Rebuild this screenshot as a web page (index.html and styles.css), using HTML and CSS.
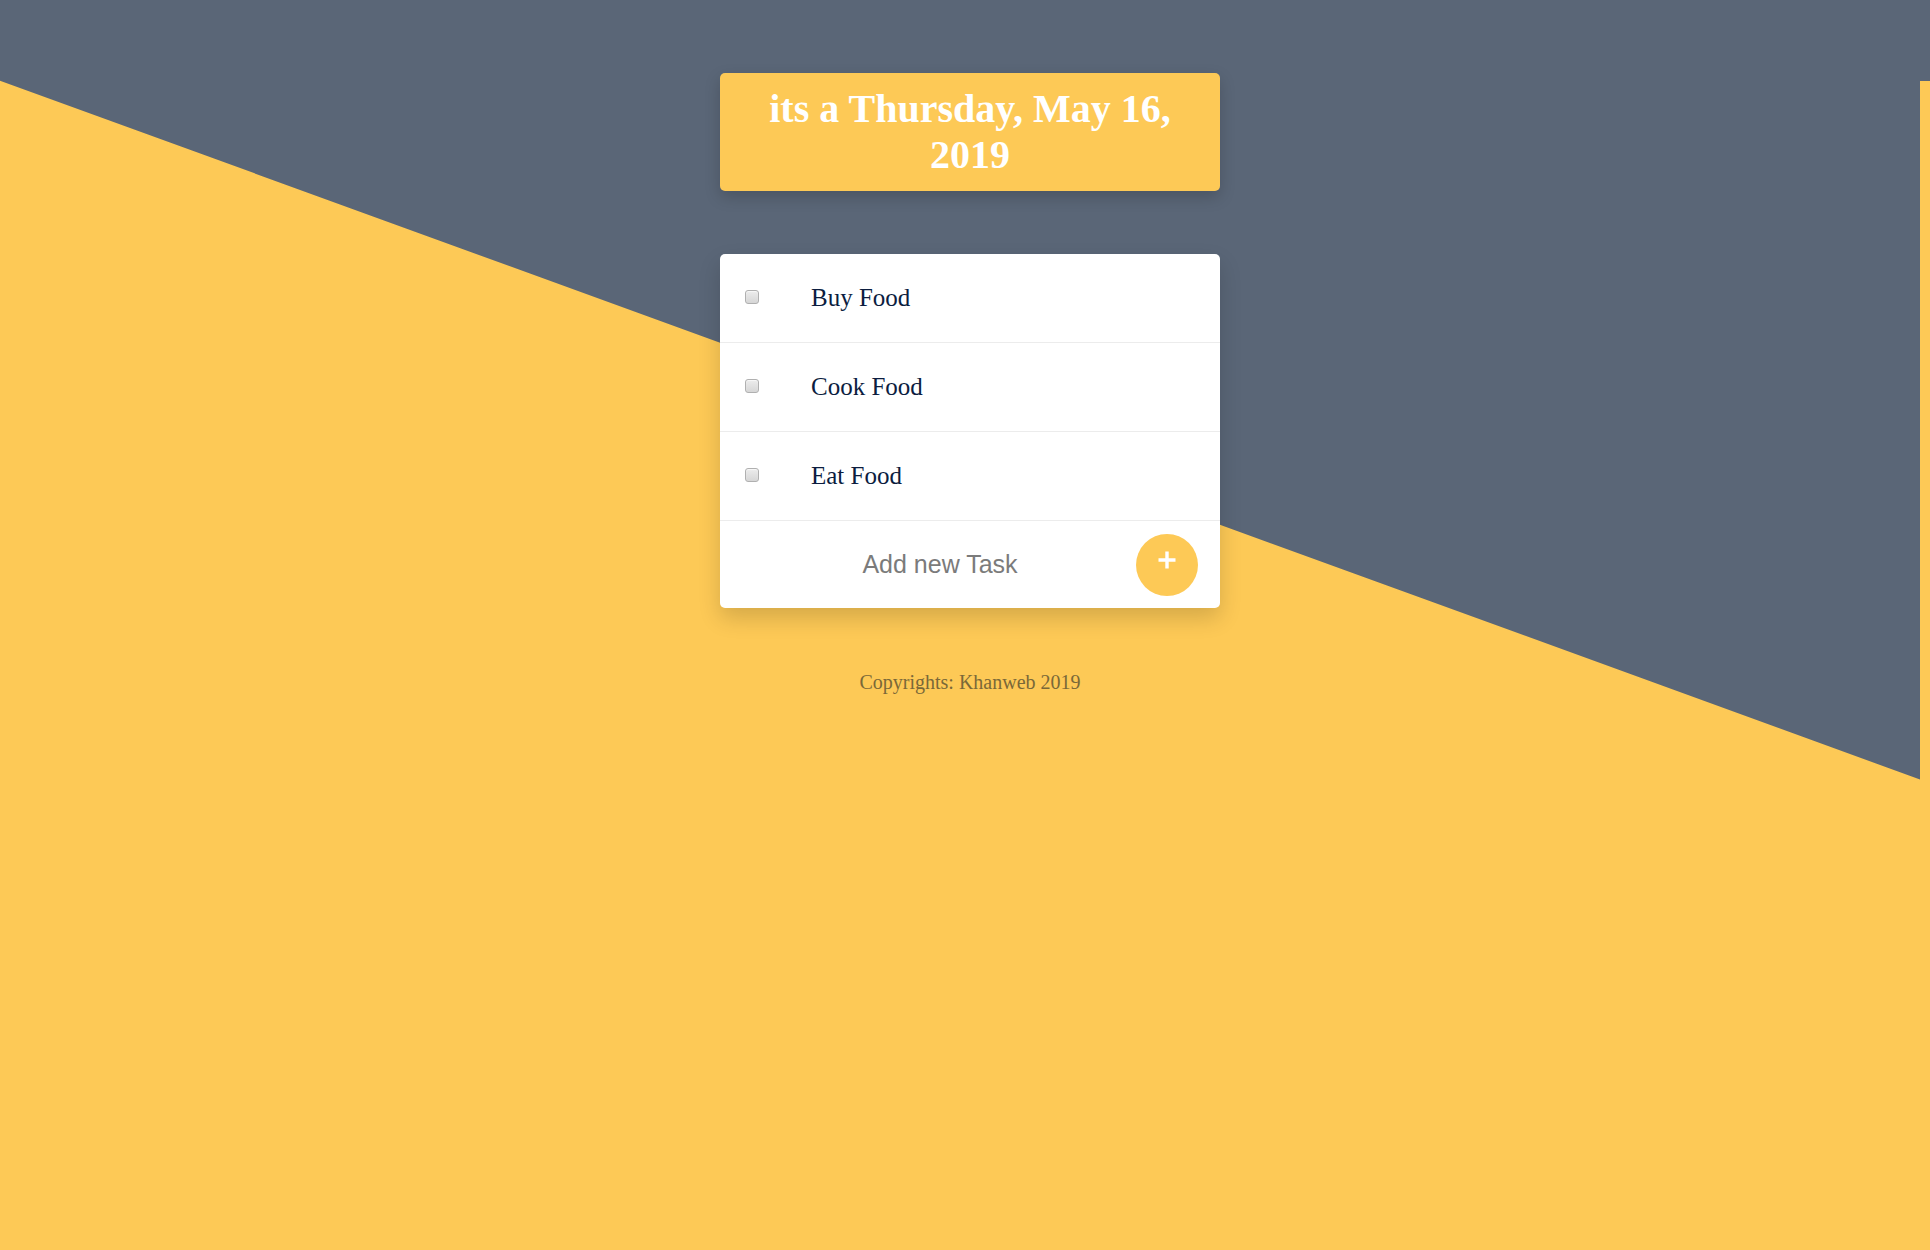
FILE: index.html
```html
<!DOCTYPE html>
<html lang="en">
<head>
<meta charset="utf-8">
<title>Todo</title>
<link rel="stylesheet" href="styles.css">
</head>
<body>
<div class="backdrop"></div>
<main class="page">
  <div class="wrap">
    <header class="date-box">
      <h1 class="date-title">its a Thursday, May 16, 2019</h1>
    </header>
    <section class="card">
      <div class="task">
        <input type="checkbox" class="check">
        <span class="task-text">Buy Food</span>
      </div>
      <div class="task">
        <input type="checkbox" class="check">
        <span class="task-text">Cook Food</span>
      </div>
      <div class="task">
        <input type="checkbox" class="check">
        <span class="task-text">Eat Food</span>
      </div>
      <form class="add-row">
        <input type="text" class="add-input" placeholder="Add new Task">
        <button type="button" class="add-btn" aria-label="add">
          <svg class="plus" width="20" height="20" viewBox="0 0 20 20"><path d="M10 1.5V18.5M1.5 10H18.5" stroke="#fff" stroke-width="3.4" fill="none"/></svg>
        </button>
      </form>
    </section>
    <footer class="copy">Copyrights: Khanweb 2019</footer>
  </div>
</main>
</body>
</html>
```
FILE: styles.css
```css
html, body {
  margin: 0;
  padding: 0;
}
body {
  background: #fdc956;
  min-height: 1250px;
  position: relative;
  font-family: "Liberation Serif", "Times New Roman", serif;
  overflow: hidden;
}
.backdrop {
  position: absolute;
  left: 0;
  top: 0;
  width: 100%;
  height: 800px;
  background: #5a6677;
  clip-path: polygon(0 0, 100% 0, 100% 81px, calc(100% - 10px) 81px, calc(100% - 10px) 779.5px, 0 80.7px);
  z-index: 0;
}
.page {
  position: relative;
  z-index: 1;
  padding-left: 10px;
  padding-top: 73px;
}
.wrap {
  width: 500px;
  margin: 0 auto;
  display: flex;
  flex-direction: column;
}
.date-box {
  background: #fdc956;
  border-radius: 5px;
  box-shadow: 0 6px 16px rgba(0, 0, 0, 0.18);
  padding: 13px 20px;
}
.date-title {
  margin: 0;
  color: #ffffff;
  font-size: 40px;
  line-height: 46px;
  font-weight: bold;
  text-align: center;
}
.card {
  margin-top: 63px;
  background: #ffffff;
  border-radius: 5px;
  box-shadow: 0 10px 22px rgba(0, 0, 0, 0.16);
  display: flex;
  flex-direction: column;
}
.task {
  height: 88px;
  border-bottom: 1px solid #ececec;
  display: flex;
  align-items: center;
  padding-left: 25px;
}
.check {
  -webkit-appearance: none;
  appearance: none;
  box-sizing: border-box;
  width: 14px;
  height: 14px;
  margin: 0 0 3px 0;
  border: 1px solid #b0b0b0;
  border-radius: 3px;
  background: linear-gradient(#ececec, #d6d6d6);
  box-shadow: inset 0 1px 1px rgba(255,255,255,0.6);
  flex: none;
}
.task-text {
  margin-left: 52px;
  font-size: 25px;
  color: #0c1d3f;
}
.add-row {
  margin: 0;
  height: 87px;
  display: flex;
  align-items: center;
  padding-right: 22px;
}
.add-input {
  border: none;
  outline: none;
  background: transparent;
  width: 400px;
  margin-left: 24px;
  padding: 0;
  font-family: "Liberation Sans", Arial, sans-serif;
  font-size: 25px;
  color: #777;
  text-align: center;
}
.add-input::placeholder {
  color: #7b7b7b;
}
.add-btn {
  margin-left: auto;
  width: 62px;
  height: 62px;
  border-radius: 50%;
  border: none;
  background: #fdc956;
  padding: 0;
  display: flex;
  align-items: center;
  justify-content: center;
  flex: none;
}
.plus {
  display: block;
  margin-bottom: 9px;
}
.copy {
  margin-top: 63px;
  text-align: center;
  font-size: 20px;
  line-height: 23px;
  color: #7a6838;
}
```
